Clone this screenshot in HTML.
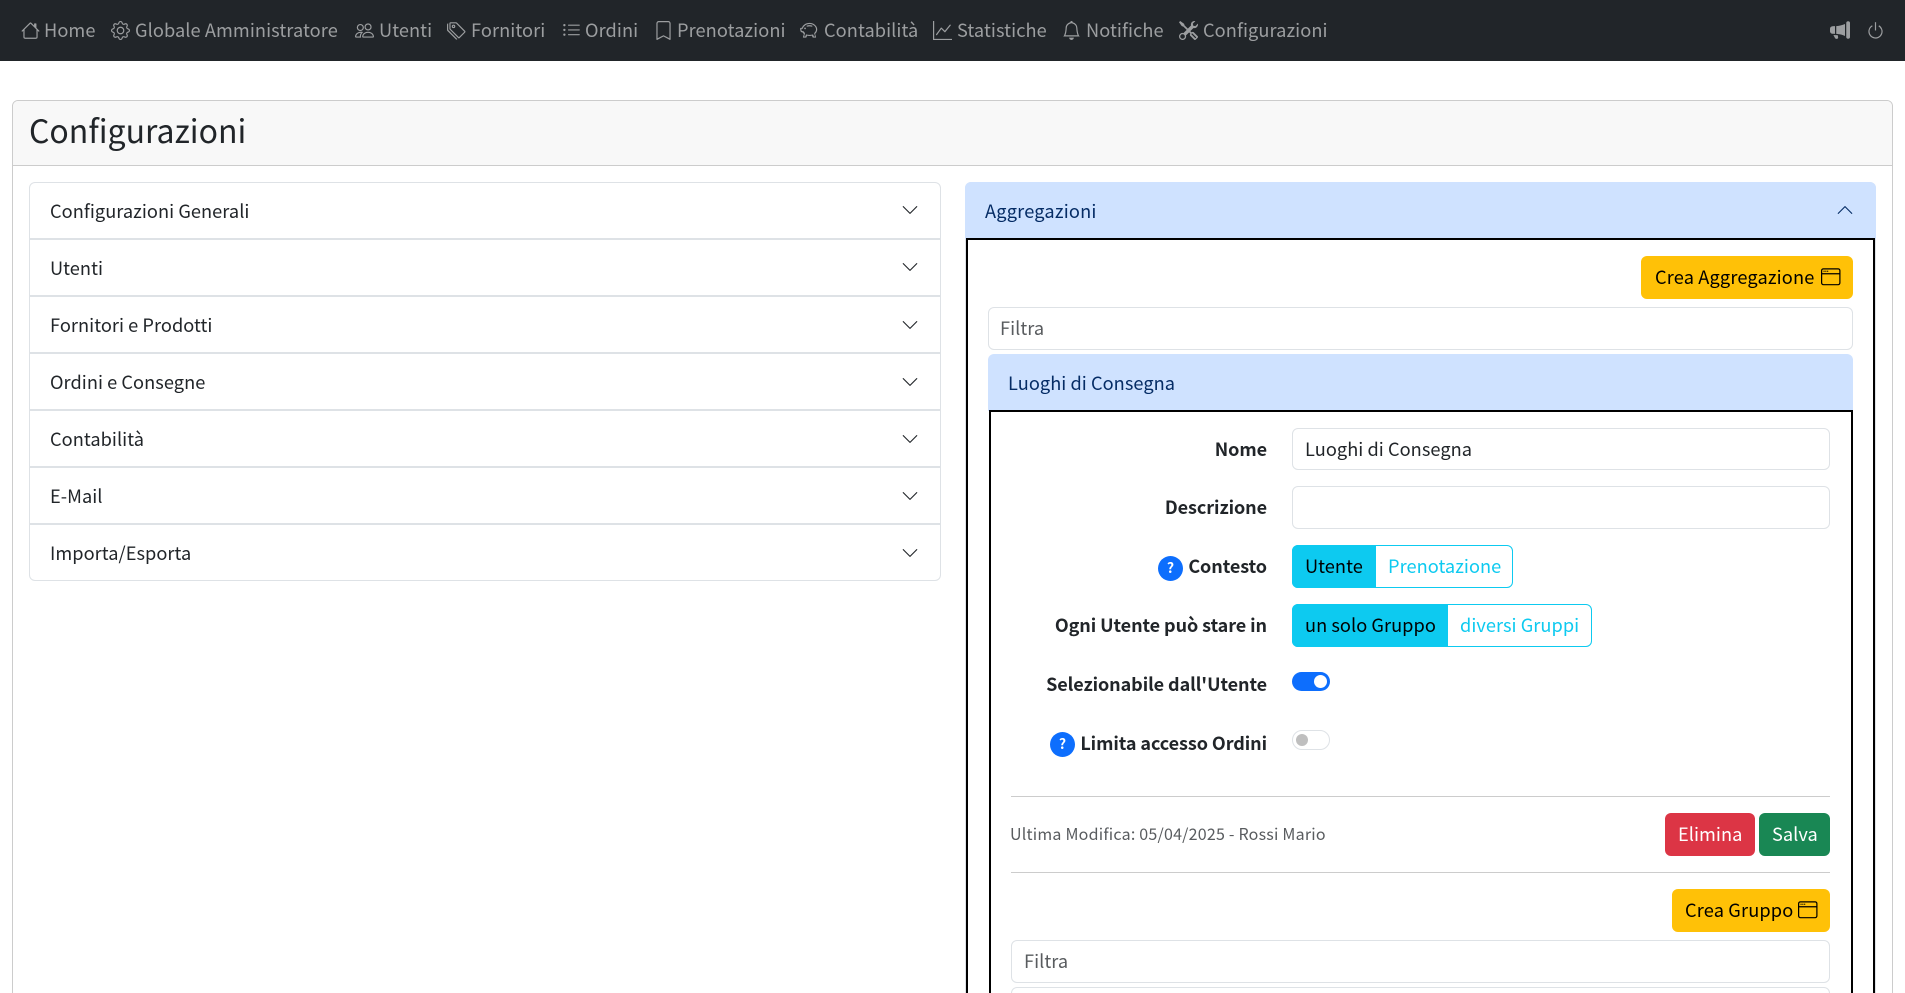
<!DOCTYPE html>
<html lang="it"><head><meta charset="utf-8"><title>Configurazioni</title>
<style>
html,body{margin:0;padding:0;width:1905px;height:993px;overflow:hidden;background:#fff}
body{position:relative;font-family:"Noto Sans CJK JP","Liberation Sans",sans-serif;font-size:18.2px;color:#212529;letter-spacing:.05px}
.a{position:absolute;box-sizing:border-box}
.t{position:absolute;white-space:nowrap;line-height:30px;height:30px}
.r{text-align:right}
.n{color:#9c9ea0;font-size:18.2px;top:15px;letter-spacing:.08px}
svg{position:absolute;fill:currentColor;display:block}
.i{width:19px;height:19px;top:20.5px;color:#9c9ea0}
.inp{position:absolute;box-sizing:border-box;border:1px solid #dee2e6;border-radius:6px;background:#fff}
.row{position:absolute;height:57px;left:30px;width:910px;border-bottom:2px solid #dee2e6;box-sizing:border-box}
.b{font-weight:700;font-size:18px;letter-spacing:-.08px}
.c{color:#0dcaf0}
.q{position:absolute;width:25px;height:25px;border-radius:50%;background:#0d6efd;color:#fff;font-size:14px;font-weight:700;line-height:25px;text-align:center;letter-spacing:0}
.w{width:19.5px;height:19.5px;color:#000}
.ch{width:18px;height:18px;left:901px}
</style></head><body>

<div class="a" style="left:0;top:0;width:1905px;height:61px;background:#212529"></div>

<svg class="i" style="left:21px" viewBox="0 0 16 16"><path d="M8.707 1.5a1 1 0 0 0-1.414 0L.646 8.146a.5.5 0 0 0 .708.708L2 8.207V13.5A1.5 1.5 0 0 0 3.5 15h9a1.5 1.5 0 0 0 1.5-1.5V8.207l.646.647a.5.5 0 0 0 .708-.708L13 5.793V2.5a.5.5 0 0 0-.5-.5h-1a.5.5 0 0 0-.5.5v1.293zM13 7.207V13.5a.5.5 0 0 1-.5.5h-9a.5.5 0 0 1-.5-.5V7.207l5-5z"/></svg>
<div class="t n" style="left:44px">Home</div>

<svg class="i" style="left:111px" viewBox="0 0 16 16"><path d="M8 4.754a3.246 3.246 0 1 0 0 6.492 3.246 3.246 0 0 0 0-6.492M5.754 8a2.246 2.246 0 1 1 4.492 0 2.246 2.246 0 0 1-4.492 0"/><path d="M9.796 1.343c-.527-1.79-3.065-1.79-3.592 0l-.094.319a.873.873 0 0 1-1.255.52l-.292-.16c-1.64-.892-3.433.902-2.54 2.541l.159.292a.873.873 0 0 1-.52 1.255l-.319.094c-1.79.527-1.79 3.065 0 3.592l.319.094a.873.873 0 0 1 .52 1.255l-.16.292c-.892 1.64.901 3.434 2.541 2.54l.292-.159a.873.873 0 0 1 1.255.52l.094.319c.527 1.79 3.065 1.79 3.592 0l.094-.319a.873.873 0 0 1 1.255-.52l.292.16c1.64.893 3.434-.902 2.54-2.541l-.159-.292a.873.873 0 0 1 .52-1.255l.319-.094c1.79-.527 1.79-3.065 0-3.592l-.319-.094a.873.873 0 0 1-.52-1.255l.16-.292c.893-1.64-.902-3.433-2.541-2.54l-.292.159a.873.873 0 0 1-1.255-.52zm-2.633.283c.246-.835 1.428-.835 1.674 0l.094.319a1.873 1.873 0 0 0 2.693 1.115l.291-.16c.764-.415 1.6.42 1.184 1.185l-.159.292a1.873 1.873 0 0 0 1.116 2.692l.318.094c.835.246.835 1.428 0 1.674l-.319.094a1.873 1.873 0 0 0-1.115 2.693l.16.291c.415.764-.42 1.6-1.185 1.184l-.291-.159a1.873 1.873 0 0 0-2.693 1.116l-.094.318c-.246.835-1.428.835-1.674 0l-.094-.319a1.873 1.873 0 0 0-2.692-1.115l-.292.16c-.764.415-1.6-.42-1.184-1.185l.159-.291A1.873 1.873 0 0 0 1.945 8.93l-.319-.094c-.835-.246-.835-1.428 0-1.674l.319-.094A1.873 1.873 0 0 0 3.06 4.377l-.16-.292c-.415-.764.42-1.6 1.185-1.184l.292.159a1.873 1.873 0 0 0 2.692-1.115z"/></svg>
<div class="t n" style="left:135px">Globale Amministratore</div>

<svg class="i" style="left:355px" viewBox="0 0 16 16"><path d="M15 14s1 0 1-1-1-4-5-4-5 3-5 4 1 1 1 1zm-7.978-1L7 12.996c.001-.264.167-1.03.76-1.72C8.312 10.629 9.282 10 11 10c1.717 0 2.687.63 3.24 1.276.593.69.758 1.457.76 1.72l-.008.002-.014.002zM11 7a2 2 0 1 0 0-4 2 2 0 0 0 0 4m3-2a3 3 0 1 1-6 0 3 3 0 0 1 6 0M6.936 9.28a6 6 0 0 0-1.23-.247A7 7 0 0 0 5 9c-4 0-5 3-5 4q0 1 1 1h4.216A2.24 2.24 0 0 1 5 13c0-1.01.377-2.042 1.09-2.904.243-.294.526-.569.846-.816M4.92 10A5.5 5.5 0 0 0 4 13H1c0-.26.164-1.03.76-1.724.545-.636 1.492-1.256 3.16-1.275ZM1.5 5.5a3 3 0 1 1 6 0 3 3 0 0 1-6 0m3-2a2 2 0 1 0 0 4 2 2 0 0 0 0-4"/></svg>
<div class="t n" style="left:379px">Utenti</div>

<svg class="i" style="left:447px" viewBox="0 0 16 16"><path d="M3 2v4.586l7 7L14.586 9l-7-7zM2 2a1 1 0 0 1 1-1h4.586a1 1 0 0 1 .707.293l7 7a1 1 0 0 1 0 1.414l-4.586 4.586a1 1 0 0 1-1.414 0l-7-7A1 1 0 0 1 2 6.586z"/><path d="M5.5 5a.5.5 0 1 1 0-1 .5.5 0 0 1 0 1m0 1a1.5 1.5 0 1 0 0-3 1.5 1.5 0 0 0 0 3M1 7.086a1 1 0 0 0 .293.707L8.75 15.25l-.043.043a1 1 0 0 1-1.414 0l-7-7A1 1 0 0 1 0 7.586V3a1 1 0 0 1 1-1z"/></svg>
<div class="t n" style="left:471px">Fornitori</div>

<svg class="i" style="left:562px" viewBox="0 0 16 16"><path d="M5 11.5a.5.5 0 0 1 .5-.5h9a.5.5 0 0 1 0 1h-9a.5.5 0 0 1-.5-.5m0-4a.5.5 0 0 1 .5-.5h9a.5.5 0 0 1 0 1h-9a.5.5 0 0 1-.5-.5m0-4a.5.5 0 0 1 .5-.5h9a.5.5 0 0 1 0 1h-9a.5.5 0 0 1-.5-.5m-3 1a1 1 0 1 0 0-2 1 1 0 0 0 0 2m0 4a1 1 0 1 0 0-2 1 1 0 0 0 0 2m0 4a1 1 0 1 0 0-2 1 1 0 0 0 0 2"/></svg>
<div class="t n" style="left:585px">Ordini</div>

<svg class="i" style="left:654px" viewBox="0 0 16 16"><path d="M2 2a2 2 0 0 1 2-2h8a2 2 0 0 1 2 2v13.5a.5.5 0 0 1-.777.416L8 13.101l-5.223 2.815A.5.5 0 0 1 2 15.5zm2-1a1 1 0 0 0-1 1v12.566l4.723-2.482a.5.5 0 0 1 .554 0L13 14.566V2a1 1 0 0 0-1-1z"/></svg>
<div class="t n" style="left:677px">Prenotazioni</div>

<svg class="i" style="left:800px" viewBox="0 0 16 16"><path d="M5 6.25a.75.75 0 1 1-1.5 0 .75.75 0 0 1 1.5 0m1.138-1.496A6.6 6.6 0 0 1 7.964 4.5c.666 0 1.303.097 1.893.273a.5.5 0 0 0 .286-.958A7.6 7.6 0 0 0 7.964 3.5c-.734 0-1.441.103-2.102.292a.5.5 0 1 0 .276.962"/><path fill-rule="evenodd" d="M7.964 1.527c-2.977 0-5.571 1.704-6.32 4.125h-.55A1 1 0 0 0 .11 6.824l.254 1.46a1.5 1.5 0 0 0 1.478 1.243h.263c.3.513.688.978 1.145 1.382l-.729 2.477a.5.5 0 0 0 .48.641h2a.5.5 0 0 0 .471-.332l.482-1.351c.635.173 1.31.267 2.011.267.707 0 1.388-.095 2.028-.272l.543 1.372a.5.5 0 0 0 .465.316h2a.5.5 0 0 0 .478-.645l-.761-2.506C13.81 9.895 14.5 8.559 14.5 7.069c0-2.99-2.9-5.542-6.536-5.542M2.39 6.5c.6-2.2 2.9-3.973 5.574-3.973 3.1 0 5.536 2.1 5.536 4.542 0 1.2-.6 2.3-1.6 3.1l.8 2.858h-1l-.7-1.8c-.9.3-2 .5-3.036.5-1 0-2-.2-2.9-.5l-.6 1.8h-1l.8-2.9c-.6-.5-1.1-1-1.4-1.6H1.842a.5.5 0 0 1-.493-.414L1.094 6.652z"/></svg>
<div class="t n" style="left:824px">Contabilità</div>

<svg class="i" style="left:933px" viewBox="0 0 16 16"><path d="M0 0h1v15h15v1H0zm14.817 3.113a.5.5 0 0 1 .07.704l-4.5 5.5a.5.5 0 0 1-.74.037L7.06 6.767l-3.656 5.027a.5.5 0 0 1-.808-.588l4-5.5a.5.5 0 0 1 .758-.06l2.609 2.61 4.15-5.073a.5.5 0 0 1 .704-.07"/></svg>
<div class="t n" style="left:957px">Statistiche</div>

<svg class="i" style="left:1062px" viewBox="0 0 16 16"><path d="M8 16a2 2 0 0 0 2-2H6a2 2 0 0 0 2 2M8 1.918l-.797.161A4 4 0 0 0 4 6c0 .628-.134 2.197-.459 3.742-.16.767-.376 1.566-.663 2.258h10.244c-.287-.692-.502-1.49-.663-2.258C12.134 8.197 12 6.628 12 6a4 4 0 0 0-3.203-3.92zM14.22 12c.223.447.481.801.78 1H1c.299-.199.557-.553.78-1C2.68 10.2 3 6.88 3 6c0-2.42 1.72-4.44 4.005-4.901a1 1 0 1 1 1.99 0A5 5 0 0 1 13 6c0 .88.32 4.2 1.22 6"/></svg>
<div class="t n" style="left:1086px">Notifiche</div>

<svg class="i" style="left:1179px" viewBox="0 0 16 16"><path d="M1 0 0 1l2.2 3.081a1 1 0 0 0 .815.419h.07a1 1 0 0 1 .708.293l2.675 2.675-2.617 2.654A3.003 3.003 0 0 0 0 13a3 3 0 1 0 5.878-.851l2.654-2.617.968.968-.305.914a1 1 0 0 0 .242 1.023l3.27 3.27a.997.997 0 0 0 1.414 0l1.586-1.586a.997.997 0 0 0 0-1.414l-3.27-3.27a1 1 0 0 0-1.023-.242L10.5 9.5l-.96-.96 2.68-2.643A3.005 3.005 0 0 0 16 3q0-.405-.102-.777l-2.14 2.141L12 4l-.364-1.757L13.777.102a3 3 0 0 0-3.675 3.68L7.462 6.46 4.793 3.793a1 1 0 0 1-.293-.707v-.071a1 1 0 0 0-.419-.814zm9.646 10.646a.5.5 0 0 1 .708 0l2.914 2.915a.5.5 0 0 1-.707.707l-2.915-2.914a.5.5 0 0 1 0-.708M3 11l.471.242.529.026.287.445.445.287.026.529L5 13l-.242.471-.026.529-.445.287-.287.445-.529.026L3 15l-.471-.242L2 14.732l-.287-.445L1.268 14l-.026-.529L1 13l.242-.471.026-.529.445-.287.287-.445.529-.026z"/></svg>
<div class="t n" style="left:1203px">Configurazioni</div>

<svg class="i" style="left:1830px;width:20px;height:20px;top:20px" viewBox="0 0 16 16"><path d="M13 2.5a1.5 1.5 0 0 1 3 0v11a1.5 1.5 0 0 1-3 0zm-1 .724c-2.067.95-4.539 1.481-7 1.656v6.237a25 25 0 0 1 1.088.085c2.053.204 4.038.668 5.912 1.56zm-8 7.841V4.934c-.68.027-1.399.043-2.008.053A2.02 2.02 0 0 0 0 7v2c0 1.106.896 1.996 1.994 2.009l.496.008a64 64 0 0 1 1.51.048m1.39 1.081q.428.032.85.078l.253 1.69a1 1 0 0 1-.983 1.187h-.548a1 1 0 0 1-.916-.599l-1.314-2.48a66 66 0 0 1 1.692.064q.491.026.966.06"/></svg>
<svg class="i" style="left:1866px;top:21px" viewBox="0 0 16 16"><path d="M7.5 1v7h1V1z"/><path d="M3 8.812a5 5 0 0 1 2.578-4.375l-.485-.874A6 6 0 1 0 11 3.616l-.501.865A5 5 0 1 1 3 8.812"/></svg>

<!-- main card -->
<div class="a" style="left:12px;top:100px;width:1881px;height:920px;border:1px solid #ccc;border-radius:6px"></div>
<div class="a" style="left:13px;top:101px;width:1879px;height:65px;background:#f8f8f8;border-bottom:1px solid #ccc;border-radius:5px 5px 0 0"></div>
<div class="t" style="left:29px;top:110px;height:40px;line-height:40px;font-size:32px;letter-spacing:0">Configurazioni</div>

<!-- left accordion -->
<div class="a" style="left:29px;top:182px;width:912px;height:399px;border:1px solid #dee2e6;border-radius:6px"></div>
<div class="row" style="top:183px"></div>
<div class="row" style="top:240px"></div>
<div class="row" style="top:297px"></div>
<div class="row" style="top:354px"></div>
<div class="row" style="top:411px"></div>
<div class="row" style="top:468px"></div>

<div class="t" style="left:50px;top:196px">Configurazioni Generali</div>
<div class="t" style="left:50px;top:253px">Utenti</div>
<div class="t" style="left:50px;top:310px">Fornitori e Prodotti</div>
<div class="t" style="left:50px;top:367px">Ordini e Consegne</div>
<div class="t" style="left:50px;top:424px">Contabilità</div>
<div class="t" style="left:50px;top:481px">E-Mail</div>
<div class="t" style="left:50px;top:538px">Importa/Esporta</div>

<svg class="ch" style="top:201px" viewBox="0 0 16 16"><path d="M1.646 4.646a.5.5 0 0 1 .708 0L8 10.293l5.646-5.647a.5.5 0 0 1 .708.708l-6 6a.5.5 0 0 1-.708 0l-6-6a.5.5 0 0 1 0-.708"/></svg>
<svg class="ch" style="top:258px" viewBox="0 0 16 16"><path d="M1.646 4.646a.5.5 0 0 1 .708 0L8 10.293l5.646-5.647a.5.5 0 0 1 .708.708l-6 6a.5.5 0 0 1-.708 0l-6-6a.5.5 0 0 1 0-.708"/></svg>
<svg class="ch" style="top:316px" viewBox="0 0 16 16"><path d="M1.646 4.646a.5.5 0 0 1 .708 0L8 10.293l5.646-5.647a.5.5 0 0 1 .708.708l-6 6a.5.5 0 0 1-.708 0l-6-6a.5.5 0 0 1 0-.708"/></svg>
<svg class="ch" style="top:373px" viewBox="0 0 16 16"><path d="M1.646 4.646a.5.5 0 0 1 .708 0L8 10.293l5.646-5.647a.5.5 0 0 1 .708.708l-6 6a.5.5 0 0 1-.708 0l-6-6a.5.5 0 0 1 0-.708"/></svg>
<svg class="ch" style="top:430px" viewBox="0 0 16 16"><path d="M1.646 4.646a.5.5 0 0 1 .708 0L8 10.293l5.646-5.647a.5.5 0 0 1 .708.708l-6 6a.5.5 0 0 1-.708 0l-6-6a.5.5 0 0 1 0-.708"/></svg>
<svg class="ch" style="top:487px" viewBox="0 0 16 16"><path d="M1.646 4.646a.5.5 0 0 1 .708 0L8 10.293l5.646-5.647a.5.5 0 0 1 .708.708l-6 6a.5.5 0 0 1-.708 0l-6-6a.5.5 0 0 1 0-.708"/></svg>
<svg class="ch" style="top:544px" viewBox="0 0 16 16"><path d="M1.646 4.646a.5.5 0 0 1 .708 0L8 10.293l5.646-5.647a.5.5 0 0 1 .708.708l-6 6a.5.5 0 0 1-.708 0l-6-6a.5.5 0 0 1 0-.708"/></svg>

<!-- right accordion -->
<div class="a" style="left:965px;top:182px;width:911px;height:850px;border:1px solid #dee2e6;border-radius:6px"></div>
<div class="a" style="left:965px;top:182px;width:911px;height:57px;background:#cfe2ff;border-radius:6px 6px 0 0"></div>
<div class="t" style="left:985px;top:196px;color:#052c65;letter-spacing:.2px">Aggregazioni</div>
<svg style="left:1836px;top:201px;width:18px;height:18px;color:#052c65;transform:rotate(180deg)" viewBox="0 0 16 16"><path d="M1.646 4.646a.5.5 0 0 1 .708 0L8 10.293l5.646-5.647a.5.5 0 0 1 .708.708l-6 6a.5.5 0 0 1-.708 0l-6-6a.5.5 0 0 1 0-.708"/></svg>
<div class="a" style="left:966px;top:238px;width:909px;height:800px;border:2px solid #000"></div>

<div class="a" style="left:1641px;top:256px;width:212px;height:43px;background:#ffc107;border-radius:6px"></div>
<div class="t" style="left:1655px;top:262px;color:#000;letter-spacing:.15px">Crea Aggregazione</div>
<svg class="w" style="left:1821px;top:267px" viewBox="0 0 16 16"><path d="M2.5 4a.5.5 0 1 0 0-1 .5.5 0 0 0 0 1m2-.5a.5.5 0 1 1-1 0 .5.5 0 0 1 1 0m1 .5a.5.5 0 1 0 0-1 .5.5 0 0 0 0 1"/><path d="M2 1a2 2 0 0 0-2 2v10a2 2 0 0 0 2 2h12a2 2 0 0 0 2-2V3a2 2 0 0 0-2-2zm13 2v2H1V3a1 1 0 0 1 1-1h12a1 1 0 0 1 1 1M2 14a1 1 0 0 1-1-1V6h14v7a1 1 0 0 1-1 1z"/></svg>

<div class="inp" style="left:988px;top:307px;width:865px;height:43px"></div>
<div class="t" style="left:1000px;top:313px;color:#595c5f">Filtra</div>

<div class="a" style="left:988px;top:354px;width:865px;height:57px;background:#cfe2ff;border-radius:6px 6px 0 0"></div>
<div class="t" style="left:1008px;top:368px;color:#052c65">Luoghi di Consegna</div>
<div class="a" style="left:989px;top:410px;width:864px;height:620px;border:2px solid #000"></div>

<!-- form -->
<div class="t r b" style="right:638px;top:434px">Nome</div>
<div class="inp" style="left:1292px;top:428px;width:538px;height:42px"></div>
<div class="t" style="left:1305px;top:434px">Luoghi di Consegna</div>

<div class="t r b" style="right:638px;top:492px">Descrizione</div>
<div class="inp" style="left:1292px;top:486px;width:538px;height:43px"></div>

<div class="q" style="left:1158px;top:556px">?</div>
<div class="t r b" style="right:638px;top:551px">Contesto</div>
<div class="a" style="left:1292px;top:545px;width:221px;height:43px;border:1px solid #0dcaf0;border-radius:6px;background:#fff"></div>
<div class="a" style="left:1292px;top:545px;width:84px;height:43px;background:#0dcaf0;border-radius:6px 0 0 6px"></div>
<div class="t" style="left:1305px;top:551px;color:#000">Utente</div>
<div class="t c" style="left:1388px;top:551px">Prenotazione</div>

<div class="t r b" style="right:638px;top:610px">Ogni Utente può stare in</div>
<div class="a" style="left:1292px;top:604px;width:300px;height:43px;border:1px solid #0dcaf0;border-radius:6px;background:#fff"></div>
<div class="a" style="left:1292px;top:604px;width:156px;height:43px;background:#0dcaf0;border-radius:6px 0 0 6px"></div>
<div class="t" style="left:1305px;top:610px;color:#000">un solo Gruppo</div>
<div class="t c" style="left:1460px;top:610px">diversi Gruppi</div>

<div class="t r b" style="right:638px;top:669px">Selezionabile dall'Utente</div>
<div class="a" style="left:1292px;top:672px;width:38px;height:19px;border-radius:10px;background:#0d6efd"></div>
<div class="a" style="left:1314px;top:675px;width:13px;height:13px;border-radius:50%;background:#fff"></div>

<div class="q" style="left:1050px;top:732px">?</div>
<div class="t r b" style="right:638px;top:728px">Limita accesso Ordini</div>
<div class="a" style="left:1292px;top:730px;width:38px;height:20px;border-radius:10px;background:#fff;border:1px solid #dee2e6"></div>
<div class="a" style="left:1296px;top:734px;width:12px;height:12px;border-radius:50%;background:#bfbfbf"></div>

<div class="a" style="left:1011px;top:796px;width:819px;height:1px;background:#ccc"></div>
<div class="t" style="left:1010px;top:818px;font-size:16px;color:#595c5f;letter-spacing:.22px">Ultima Modifica: 05/04/2025 - Rossi Mario</div>
<div class="a" style="left:1665px;top:813px;width:90px;height:43px;background:#dc3545;border-radius:6px"></div>
<div class="t" style="left:1678px;top:819px;color:#fff">Elimina</div>
<div class="a" style="left:1759px;top:813px;width:71px;height:43px;background:#198754;border-radius:6px"></div>
<div class="t" style="left:1772px;top:819px;color:#fff">Salva</div>
<div class="a" style="left:1011px;top:872px;width:819px;height:1px;background:#ccc"></div>

<div class="a" style="left:1672px;top:889px;width:158px;height:43px;background:#ffc107;border-radius:6px"></div>
<div class="t" style="left:1685px;top:895px;color:#000;letter-spacing:.15px">Crea Gruppo</div>
<svg class="w" style="left:1798px;top:900px" viewBox="0 0 16 16"><path d="M2.5 4a.5.5 0 1 0 0-1 .5.5 0 0 0 0 1m2-.5a.5.5 0 1 1-1 0 .5.5 0 0 1 1 0m1 .5a.5.5 0 1 0 0-1 .5.5 0 0 0 0 1"/><path d="M2 1a2 2 0 0 0-2 2v10a2 2 0 0 0 2 2h12a2 2 0 0 0 2-2V3a2 2 0 0 0-2-2zm13 2v2H1V3a1 1 0 0 1 1-1h12a1 1 0 0 1 1 1M2 14a1 1 0 0 1-1-1V6h14v7a1 1 0 0 1-1 1z"/></svg>

<div class="inp" style="left:1011px;top:940px;width:819px;height:43px"></div>
<div class="t" style="left:1024px;top:946px;color:#595c5f">Filtra</div>
<div class="inp" style="left:1011px;top:987px;width:819px;height:43px"></div>

</body></html>
